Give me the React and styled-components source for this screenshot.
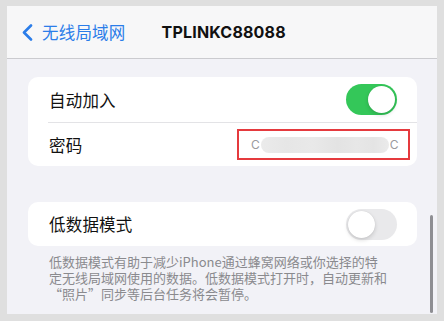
import React from "react";
import styled, { createGlobalStyle } from "styled-components";

const GlobalStyle = createGlobalStyle`
  html, body {
    margin: 0;
    padding: 0;
    background: #dfdfdf;
  }
  body {
    font-family: "Noto Sans CJK SC", "Noto Sans", sans-serif;
  }
  * {
    box-sizing: border-box;
  }
`;

const Frame = styled.div`
  position: relative;
  width: 430px;
  height: 308px;
  margin: 6px 7px 7px 7px;
  background: #f2f2f7;
  overflow: hidden;
`;

const NavBar = styled.header`
  height: 53px;
  display: flex;
  align-items: center;
  padding-left: 14px;
  background: #f7f7f8;
  border-bottom: 1px solid #cbcbcf;
`;

const BackButton = styled.div`
  display: flex;
  align-items: center;
  gap: 9px;
  color: #2b7de9;
  font-size: 16.5px;
  letter-spacing: 0.2px;
`;

const Title = styled.h1`
  margin: 0 0 0 36px;
  font-family: Inter, "Noto Sans", sans-serif;
  font-size: 16px;
  font-weight: 700;
  color: #111;
  letter-spacing: 0.2px;
`;

const Content = styled.main`
  padding: 18px 20px 0 21px;
`;

const Card = styled.section`
  background: #ffffff;
  border-radius: 10px;
  margin-bottom: ${(p) => p.$gap || 0}px;
`;

const Row = styled.div`
  height: ${(p) => p.$h}px;
  display: flex;
  align-items: center;
  justify-content: space-between;
  padding: 0 ${(p) => p.$pr ?? 20}px 0 21px;
`;

const Divider = styled.div`
  height: 1px;
  margin-left: 20px;
  background: #e3e3e6;
`;

const Label = styled.span`
  font-size: 16.5px;
  color: #111;
  letter-spacing: 0.2px;
`;

const Toggle = styled.div`
  position: relative;
  width: 51px;
  height: 31px;
  border-radius: 16px;
  background: ${(p) => (p.$on ? "#34c759" : "#e9e9eb")};
  flex-shrink: 0;
`;

const Knob = styled.div`
  position: absolute;
  top: 2px;
  left: ${(p) => (p.$on ? "22px" : "2px")};
  width: 27px;
  height: 27px;
  border-radius: 50%;
  background: #fff;
  box-shadow: 0 2px 4px rgba(0, 0, 0, 0.15), 0 0 1px rgba(0, 0, 0, 0.12);
`;

const PasswordBox = styled.div`
  width: 173px;
  height: 31px;
  display: flex;
  align-items: center;
  padding: 0 0 0 12px;
  border: 2.5px solid #e53a3e;
  font-family: Inter, "Noto Sans", sans-serif;
  font-size: 12px;
  color: #9a9a9e;
`;

const Blur = styled.div`
  width: 128px;
  height: 16px;
  margin: 0 1px;
  border-radius: 8px;
  background: linear-gradient(
    90deg,
    #ebebeb 0%,
    #e6e6e6 20%,
    #e9e9e9 40%,
    #e3e3e3 60%,
    #e7e7e7 75%,
    #e4e4e4 88%,
    #ebebeb 100%
  );
`;

const Footer = styled.p`
  margin: 0;
  padding: 8px 0 0 21px;
  font-size: 13px;
  line-height: 16px;
  color: #8a8a8e;
`;

const ScrollThumb = styled.div`
  position: absolute;
  left: 423px;
  top: 209px;
  width: 3px;
  height: 98px;
  border-radius: 2px;
  background: #8e8e93;
`;

function Chevron() {
  return (
    <svg width="12" height="17" viewBox="0 0 12 17">
      <path
        d="M10 1.5 L3 8.5 L10 15.5"
        fill="none"
        stroke="#2b7de9"
        strokeWidth="2.6"
        strokeLinecap="round"
        strokeLinejoin="round"
      />
    </svg>
  );
}

export default function App() {
  return (
    <>
      <GlobalStyle />
      <Frame>
        <NavBar>
          <BackButton>
            <Chevron />
            无线局域网
          </BackButton>
          <Title>TPLINKC88088</Title>
        </NavBar>
        <Content>
          <Card $gap={36}>
            <Row $h={45}>
              <Label>自动加入</Label>
              <Toggle $on>
                <Knob $on />
              </Toggle>
            </Row>
            <Divider />
            <Row $h={43} $pr={7}>
              <Label>密码</Label>
              <PasswordBox>
                C<Blur />C
              </PasswordBox>
            </Row>
          </Card>
          <Card>
            <Row $h={44}>
              <Label>低数据模式</Label>
              <Toggle>
                <Knob />
              </Toggle>
            </Row>
          </Card>
          <Footer>
            低数据模式有助于减少iPhone通过蜂窝网络或你选择的特
            <br />
            定无线局域网使用的数据。低数据模式打开时，自动更新和
            <br />
            “照片”同步等后台任务将会暂停。
          </Footer>
        </Content>
        <ScrollThumb />
      </Frame>
    </>
  );
}
